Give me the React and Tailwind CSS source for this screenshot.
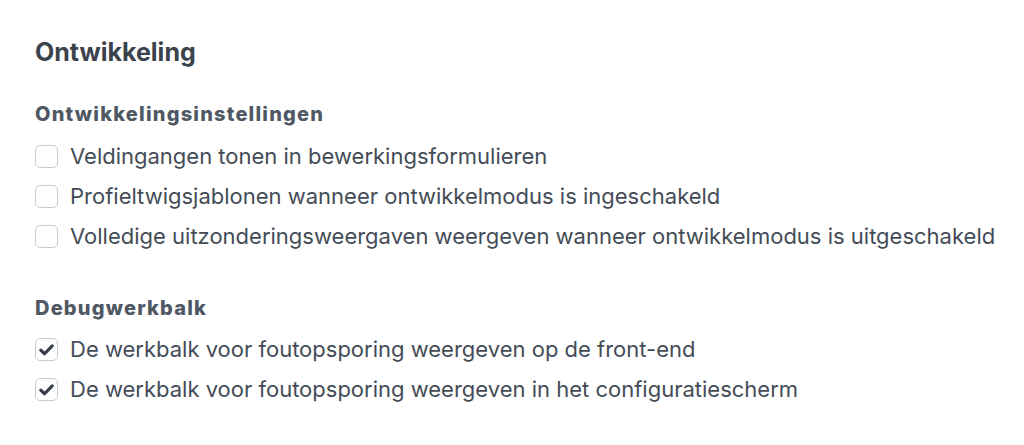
const Check = ({ checked, label }) => (
  <label className="flex items-center h-[40px]">
    <span className="w-[23px] h-[23px] rounded-[5px] border border-[#c6cbd3] bg-white flex items-center justify-center shrink-0">
      {checked && (
        <svg viewBox="0 0 16 16" className="w-[17px] h-[17px]">
          <path d="M2.6 8.6 L6.2 12 L13.4 4.6" fill="none" stroke="#363d47" strokeWidth="3" strokeLinecap="round" strokeLinejoin="round" />
        </svg>
      )}
    </span>
    <span className="ml-[12px] text-[22px] text-[#444c57] whitespace-nowrap">{label}</span>
  </label>
);

export default function App() {
  return (
    <div className="w-[1024px] h-[445px] bg-white px-[35px] pt-[36px]" style={{ fontFamily: "Inter, 'Noto Sans', sans-serif" }}>
      <h1 className="text-[25px] font-bold text-[#3a424c] leading-[32px]">Ontwikkeling</h1>

      <h2 className="mt-[32px] text-[20px] font-extrabold tracking-[1.2px] text-[#505864] leading-[28px]">Ontwikkelingsinstellingen</h2>
      <div className="mt-[8px] flex flex-col">
        <Check label="Veldingangen tonen in bewerkingsformulieren" />
        <Check label="Profieltwigsjablonen wanneer ontwikkelmodus is ingeschakeld" />
        <Check label="Volledige uitzonderingsweergaven weergeven wanneer ontwikkelmodus is uitgeschakeld" />
      </div>

      <h2 className="mt-[38px] text-[20px] font-extrabold tracking-[1.2px] text-[#505864] leading-[28px]">Debugwerkbalk</h2>
      <div className="mt-[7px] flex flex-col">
        <Check checked label="De werkbalk voor foutopsporing weergeven op de front-end" />
        <Check checked label="De werkbalk voor foutopsporing weergeven in het configuratiescherm" />
      </div>
    </div>
  );
}
